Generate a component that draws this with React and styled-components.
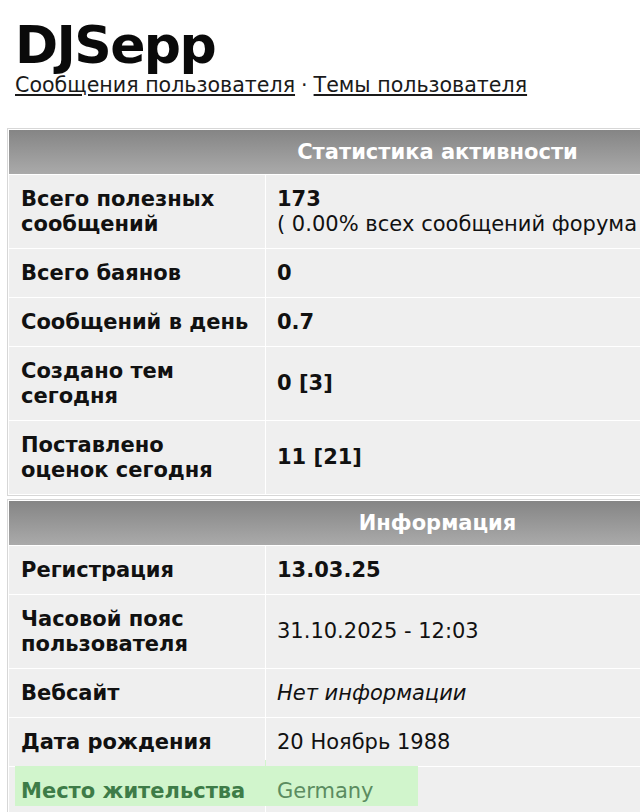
import React from "react";
import styled, { createGlobalStyle } from "styled-components";

const Global = createGlobalStyle`
  html { overflow: hidden; }
  body {
    margin: 0;
    background: #fff;
    font-family: "DejaVu Sans", Verdana, sans-serif;
    color: #111;
  }
`;

const Page = styled.div`
  padding: 0 0 0 7px;
  width: 880px;
`;

const Title = styled.h1`
  margin: 20px 0 0 8px;
  font-size: 52px;
  line-height: 50px;
  letter-spacing: -1.6px;
  font-weight: bold;
  color: #0a0a0a;
`;

const Links = styled.div`
  margin: 3px 0 0 8px;
  font-size: 20.6px;
  line-height: 24px;
  color: #222;
`;

const Link = styled.a`
  color: #1a1a1a;
  text-decoration: underline;
  text-underline-offset: 2px;
`;

const Sep = styled.span`
  margin: 0 6px;
`;

const Table = styled.div`
  margin-top: ${(p) => p.$mt}px;
  border: 1px solid #d7d7d7;
  padding: 1px;
  background: #fff;
  display: grid;
  gap: 1px;
  width: 857px;
`;

const Header = styled.div`
  height: 44px;
  background: linear-gradient(#858585, #aaaaaa);
  color: #fff;
  font-weight: bold;
  font-size: 21px;
  display: flex;
  align-items: center;
  justify-content: center;
`;

const Row = styled.div`
  position: relative;
  display: grid;
  grid-template-columns: 256px 600px;
  gap: 1px;
`;

const Cell = styled.div`
  position: relative;
  z-index: 1;
  background: ${(p) => (p.$hl ? "transparent" : "#efefef")};
  padding: 11.5px 12px 11.5px ${(p) => (p.$label ? 12 : 11)}px;
  font-size: 21px;
  line-height: 25px;
  font-weight: ${(p) => (p.$bold ? "bold" : "normal")};
  font-style: ${(p) => (p.$italic ? "italic" : "normal")};
  color: ${(p) => (p.$hl ? (p.$label ? "#3e7c48" : "#5b8c60") : "#111")};
  display: flex;
  flex-direction: column;
  justify-content: center;
  white-space: nowrap;
`;

const HlBack = styled.div`
  position: absolute;
  inset: 0;
  display: grid;
  grid-template-columns: 256px 600px;
  gap: 1px;
  z-index: 0;
  &::before, &::after {
    content: "";
    background: #efefef;
  }
`;

const Highlight = styled.div`
  position: absolute;
  left: 6px;
  top: -7px;
  width: 403px;
  height: 46px;
  background: #d1f5cc;
  z-index: 0;
`;

const Strong = styled.b``;

const stats = [
  ["Всего полезных сообщений", <><Strong>173</Strong><span>( 0.00% всех сообщений форума )</span></>, false],
  ["Всего баянов", "0", true],
  ["Сообщений в день", "0.7", true],
  ["Создано тем сегодня", "0 [3]", true],
  ["Поставлено оценок сегодня", "11 [21]", true],
];

const labelsBreak = {
  "Всего полезных сообщений": ["Всего полезных", "сообщений"],
  "Создано тем сегодня": ["Создано тем", "сегодня"],
  "Поставлено оценок сегодня": ["Поставлено", "оценок сегодня"],
  "Часовой пояс пользователя": ["Часовой пояс", "пользователя"],
};

const info = [
  ["Регистрация", "13.03.25", { bold: true }],
  ["Часовой пояс пользователя", "31.10.2025 - 12:03", {}],
  ["Вебсайт", "Нет информации", { italic: true }],
  ["Дата рождения", "20 Ноябрь 1988", {}],
  ["Место жительства", "Germany", { hl: true }],
];

function Label({ text, hl }) {
  const parts = labelsBreak[text];
  return (
    <Cell $label $bold $hl={hl}>
      {parts ? parts.map((p) => <span key={p}>{p}</span>) : text}
    </Cell>
  );
}

export default function App() {
  return (
    <>
      <Global />
      <Page>
        <Title>DJSepp</Title>
        <Links>
          <Link href="#">Сообщения пользователя</Link>
          <Sep>·</Sep>
          <Link href="#">Темы пользователя</Link>
        </Links>
        <Table $mt={31}>
          <Header>Статистика активности</Header>
          {stats.map(([l, v, b]) => (
            <Row key={l}>
              <Label text={l} />
              <Cell $bold={b}>{v}</Cell>
            </Row>
          ))}
        </Table>
        <Table $mt={3}>
          <Header>Информация</Header>
          {info.map(([l, v, o]) => (
            <Row key={l}>
              {o.hl && <HlBack />}
              {o.hl && <Highlight />}
              <Label text={l} hl={o.hl} />
              <Cell $bold={o.bold} $italic={o.italic} $hl={o.hl}>
                {v}
              </Cell>
            </Row>
          ))}
        </Table>
      </Page>
    </>
  );
}
